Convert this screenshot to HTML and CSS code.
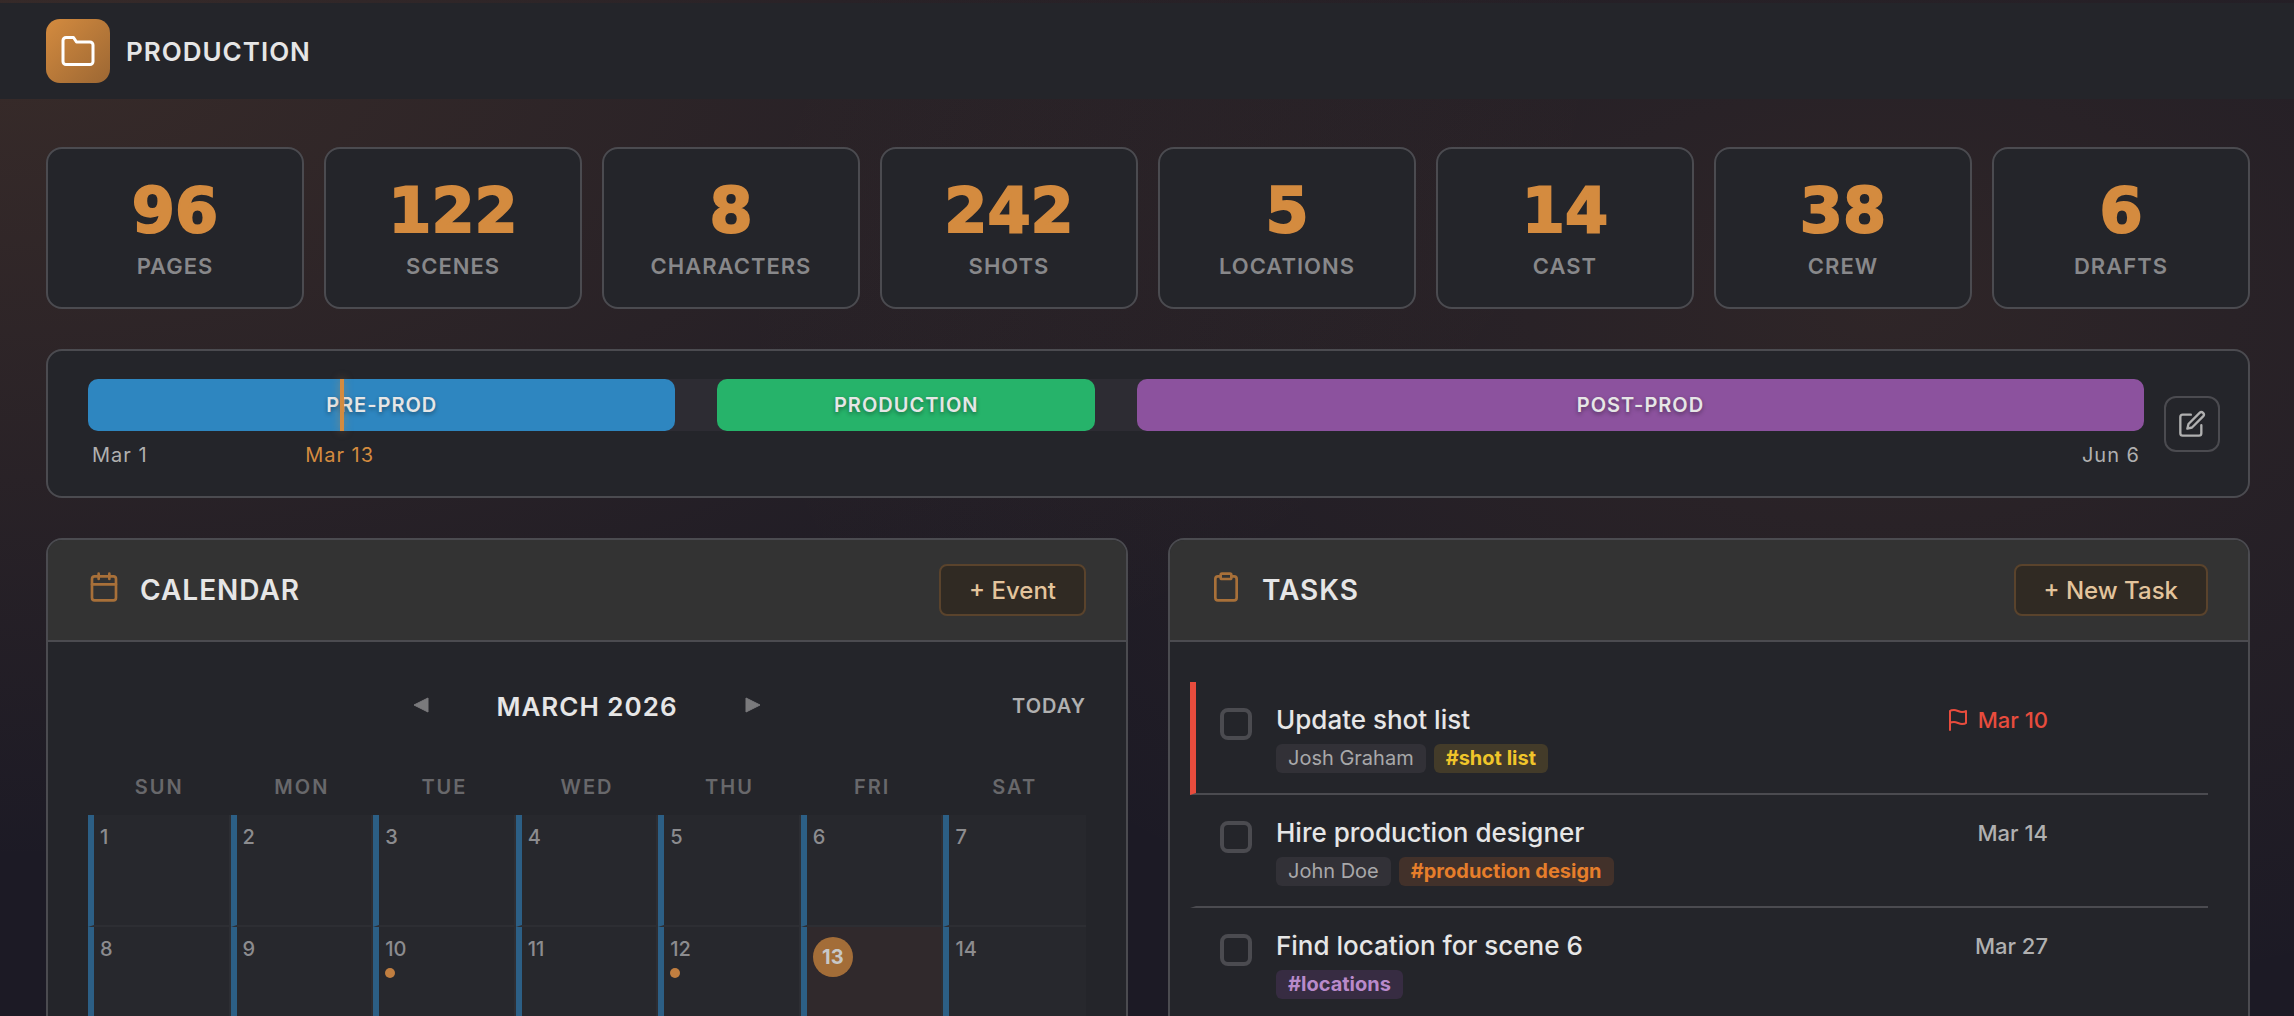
FILE: index.html
```html
<!DOCTYPE html>
<html lang="en">
<head>
    <meta charset="UTF-8">
    <meta name="viewport" content="width=device-width, initial-scale=1.0">
    <title>Production</title>
    <link rel="stylesheet" href="styles.css">
</head>
<body>
<header class="topbar">
    <div class="logo">
        <svg class="icon" width="36" height="36" viewBox="0 0 24 24"><path d="M22 19a2 2 0 0 1-2 2H4a2 2 0 0 1-2-2V5a2 2 0 0 1 2-2h5l2 3h9a2 2 0 0 1 2 2z"/></svg>
    </div>
    <h1>PRODUCTION</h1>
</header>
<main class="page">
    <section class="stats">
        <div class="stat"><div class="num">96</div><div class="label">PAGES</div></div>
        <div class="stat"><div class="num">122</div><div class="label">SCENES</div></div>
        <div class="stat"><div class="num">8</div><div class="label">CHARACTERS</div></div>
        <div class="stat"><div class="num">242</div><div class="label">SHOTS</div></div>
        <div class="stat"><div class="num">5</div><div class="label">LOCATIONS</div></div>
        <div class="stat"><div class="num">14</div><div class="label">CAST</div></div>
        <div class="stat"><div class="num">38</div><div class="label">CREW</div></div>
        <div class="stat"><div class="num">6</div><div class="label">DRAFTS</div></div>
    </section>

    <!-- 98 days, one fr per day -->
    <section class="timeline">
        <div class="schedule">
            <div class="track">
                <div class="phase pre">PRE-PROD</div>
                <div class="phase prod">PRODUCTION</div>
                <div class="phase post">POST-PROD</div>
                <div class="now" style="left:12.24%"></div>
            </div>
            <div class="dates">
                <span>Mar 1</span>
                <span class="now-date" style="left:12.24%">Mar 13</span>
                <span>Jun 6</span>
            </div>
        </div>
        <button class="edit" aria-label="Edit schedule">
            <svg class="icon" width="28" height="28" viewBox="0 0 24 24"><path d="M11 4H4a2 2 0 0 0-2 2v14a2 2 0 0 0 2 2h14a2 2 0 0 0 2-2v-7"/><path d="M18.5 2.5a2.121 2.121 0 0 1 3 3L12 15l-4 1 1-4 9.5-9.5z"/></svg>
        </button>
    </section>

    <div class="panels">
        <section class="panel">
            <div class="panel-head">
                <svg class="icon" width="32" height="32" viewBox="0 0 24 24"><rect x="3" y="4" width="18" height="18" rx="2"/><path d="M16 2v4M8 2v4M3 10h18"/></svg>
                <h2>CALENDAR</h2>
                <button class="add">+ Event</button>
            </div>
            <div class="calendar">
                <div class="month">
                    <button class="arrow" aria-label="Previous month"><svg width="16" height="16" viewBox="0 0 16 16"><path d="M15 1v14L1 8z"/></svg></button>
                    <h3>MARCH 2026</h3>
                    <button class="arrow" aria-label="Next month"><svg width="16" height="16" viewBox="0 0 16 16"><path d="M1 1v14l14-7z"/></svg></button>
                    <button class="today-btn">TODAY</button>
                </div>
                <table>
                    <thead>
                        <tr><th>SUN</th><th>MON</th><th>TUE</th><th>WED</th><th>THU</th><th>FRI</th><th>SAT</th></tr>
                    </thead>
                    <tbody>
                        <tr>
                            <td><span class="day">1</span></td>
                            <td><span class="day">2</span></td>
                            <td><span class="day">3</span></td>
                            <td><span class="day">4</span></td>
                            <td><span class="day">5</span></td>
                            <td><span class="day">6</span></td>
                            <td><span class="day">7</span></td>
                        </tr>
                        <tr>
                            <td><span class="day">8</span></td>
                            <td><span class="day">9</span></td>
                            <td><span class="day">10</span><i class="dot"></i></td>
                            <td><span class="day">11</span></td>
                            <td><span class="day">12</span><i class="dot"></i></td>
                            <td class="today"><span class="day">13</span></td>
                            <td><span class="day">14</span></td>
                        </tr>
                    </tbody>
                </table>
            </div>
        </section>

        <section class="panel">
            <div class="panel-head">
                <svg class="icon" width="32" height="32" viewBox="0 0 24 24"><path d="M16 4h2a2 2 0 0 1 2 2v14a2 2 0 0 1-2 2H6a2 2 0 0 1-2-2V6a2 2 0 0 1 2-2h2"/><rect x="8" y="2" width="8" height="4" rx="1"/></svg>
                <h2>TASKS</h2>
                <button class="add">+ New Task</button>
            </div>
            <ul class="tasks">
                <li class="task late">
                    <input type="checkbox" id="t1">
                    <div class="info">
                        <label for="t1">Update shot list</label>
                        <div class="tags"><span class="tag">Josh Graham</span><span class="tag yellow">#shot list</span></div>
                    </div>
                    <div class="due">
                        <svg class="icon" width="24" height="24" viewBox="0 0 24 24"><path d="M4 15s1-1 4-1 5 2 8 2 4-1 4-1V3s-1 1-4 1-5-2-8-2-4 1-4 1zM4 22v-7"/></svg>
                        Mar 10
                    </div>
                </li>
                <li class="task">
                    <input type="checkbox" id="t2">
                    <div class="info">
                        <label for="t2">Hire production designer</label>
                        <div class="tags"><span class="tag">John Doe</span><span class="tag orange">#production design</span></div>
                    </div>
                    <div class="due">Mar 14</div>
                </li>
                <li class="task">
                    <input type="checkbox" id="t3">
                    <div class="info">
                        <label for="t3">Find location for scene 6</label>
                        <div class="tags"><span class="tag purple">#locations</span></div>
                    </div>
                    <div class="due">Mar 27</div>
                </li>
            </ul>
        </section>
    </div>
</main>
</body>
</html>
```

FILE: styles.css
```css
*{
    margin:0;
    padding:0;
    box-sizing: border-box;
}
body{
    height:100vh;
    overflow: hidden;
    padding-top:3px;
    font-family: Inter, "Liberation Sans", sans-serif;
    color:#e6e6e6;
    background:
        radial-gradient(ellipse 70% 80% at 0% 5%, rgba(212,139,64,.15), transparent),
        radial-gradient(ellipse 50% 70% at 82% 30%, rgba(212,139,64,.1), transparent),
        #1c1a25;
}
button{
    font-family: inherit;
    background: none;
    border:none;
    cursor: pointer;
}
.icon{
    fill:none;
    stroke:currentColor;
    stroke-width:2;
    stroke-linecap: round;
    stroke-linejoin: round;
}

.topbar{
    display: flex;
    align-items: center;
    gap:16px;
    padding:16px 46px;
    background-color: #24252a;
}
.logo{
    width:64px;
    height:64px;
    display: flex;
    align-items: center;
    justify-content: center;
    border-radius:14px;
    background: linear-gradient(135deg, #d48b3f, #9c6733);
    color:#fff;
}
.topbar h1{
    font-size:26px;
    font-weight:600;
    letter-spacing:1px;
}

.page{
    padding:48px 44px 0 46px;
}
.stats{
    display: grid;
    grid-template-columns: repeat(8, 1fr);
    gap:20px;
}
.stat{
    padding:28px 0;
    text-align: center;
    border:2px solid #4b4b50;
    border-radius:16px;
    background-color: #24252a;
}
.num{
    font-family: "DejaVu Sans", sans-serif;
    font-size:62px;
    font-weight:bold;
    line-height:68px;
    color:#d48b3f;
    -webkit-text-stroke:2px #d48b3f;
}
.label{
    margin-top:8px;
    font-size:22px;
    font-weight:600;
    line-height:26px;
    letter-spacing:1px;
    color:#88888a;
}

.timeline{
    display: flex;
    align-items: center;
    gap:20px;
    margin-top:40px;
    padding:28px 28px 28px 40px;
    border:2px solid #4b4b50;
    border-radius:16px;
    background-color: #24252a;
}
.schedule{
    flex:1;
}
.track{
    position: relative;
    display: grid;
    grid-template-columns: 28fr 2fr 18fr 2fr 48fr;
    height:52px;
    border-radius:10px;
    background-color: #2d2c33;
}
.phase{
    display: flex;
    align-items: center;
    justify-content: center;
    border-radius:10px;
    font-size:20px;
    font-weight:600;
    letter-spacing:1px;
    text-shadow:0 2px 4px rgba(0,0,0,.4);
}
.pre{
    background-color: #2e86c0;
}
.prod{
    grid-column:3;
    background-color: #26b36a;
}
.post{
    grid-column:5;
    background-color: #8c529e;
}
.now{
    position: absolute;
    top:0;
    bottom:0;
    width:4px;
    background-color: #d48b3f;
    box-shadow:0 0 8px rgba(212,139,64,.5);
}
.dates{
    position: relative;
    display: flex;
    justify-content: space-between;
    padding:12px 4px 0;
    font-size:20px;
    line-height:25px;
    letter-spacing:1px;
    color:#b0b0b0;
}
.now-date{
    position: absolute;
    transform: translateX(-50%);
    color:#d48b3f;
}
.edit{
    display: flex;
    align-items: center;
    justify-content: center;
    width:56px;
    height:56px;
    border:2px solid #4b4b50;
    border-radius:12px;
    color:#b0b0b0;
}

.panels{
    display: grid;
    grid-template-columns: 1fr 1fr;
    gap:40px;
    margin-top:40px;
}
.panel{
    overflow: hidden;
    border:2px solid #4b4b50;
    border-radius:16px;
    background-color: #24252a;
}
.panel-head{
    display: flex;
    align-items: center;
    gap:20px;
    padding:24px 40px;
    background-color: #333;
    border-bottom:2px solid #4b4b50;
}
.panel-head .icon{
    margin-bottom:6px;
    color:#a87039;
}
.panel-head h2{
    font-size:28px;
    font-weight:600;
    letter-spacing:1px;
}
.add{
    height:52px;
    margin-left:auto;
    padding:0 28px;
    border:2px solid #5a432c;
    border-radius:8px;
    background-color: #302a23;
    font-size:24px;
    font-weight:500;
    color:#e3c49c;
}

.calendar{
    padding:40px;
}
.month{
    display: grid;
    grid-template-columns: 1fr 48px 284px 48px 1fr;
    align-items: center;
    height:48px;
}
.month h3{
    text-align: center;
    font-size:26px;
    font-weight:600;
    letter-spacing:1px;
}
.arrow{
    grid-column:2;
    height:48px;
}
.arrow svg{
    fill:#7a7a7c;
    stroke:#7a7a7c;
    stroke-linejoin: round;
}
h3 + .arrow{
    grid-column:4;
}
.today-btn{
    justify-self: end;
    font-size:20px;
    font-weight:600;
    letter-spacing:1px;
    color:#b0b0b0;
}
.calendar table{
    width:100%;
    margin-top:36px;
    table-layout: fixed;
    border-spacing:0;
}
th{
    height:49px;
    padding-bottom:8px;
    font-size:20px;
    font-weight:600;
    letter-spacing:2px;
    color:#68686b;
}
td{
    height:112px;
    padding:10px 6px;
    vertical-align: top;
    border:solid #2d2e33;
    border-width:0 2px 2px 0;
    border-left:6px solid #2c5f85;
    background-color: #27282d;
}
td:last-child{
    border-right:none;
}
.day{
    display: block;
    font-size:20px;
    font-weight:500;
    line-height:25px;
    color:#8c8c8f;
}
.dot{
    display: block;
    width:10px;
    height:10px;
    margin-top:6px;
    border-radius:50%;
    background-color: #c07e40;
}
.today{
    background-color: #30292c;
}
.today .day{
    width:40px;
    line-height:40px;
    border-radius:50%;
    background-color: #a36d38;
    text-align: center;
    font-weight:700;
    color:#c8c8c8;
}

.tasks{
    list-style: none;
    padding:40px 40px 40px 20px;
}
.task{
    display: flex;
    align-items: flex-start;
    gap:24px;
    padding:22px 160px 20px 24px;
    border-bottom:2px solid #4b4b50;
    border-left:6px solid transparent;
}
.late{
    border-left-color:#e84c3d;
}
.task input{
    appearance: none;
    width:32px;
    height:32px;
    margin-top:4px;
    border:4px solid #4b4b50;
    border-radius:8px;
}
.info{
    flex:1;
}
.info label{
    display: block;
    font-size:26px;
    font-weight:500;
    line-height:32px;
}
.tags{
    display: flex;
    gap:8px;
    margin-top:8px;
}
.tag{
    padding:0 12px;
    border-radius:6px;
    background-color: #323137;
    font-size:20px;
    line-height:29px;
    color:#a8a8aa;
}
.yellow, .orange, .purple{
    font-weight:700;
}
.yellow{
    background-color: #433b29;
    color:#f0c52a;
}
.orange{
    background-color: #42312a;
    color:#e67e2b;
}
.purple{
    background-color: #372c42;
    color:#b98acb;
}
.due{
    display: flex;
    align-items: center;
    gap:8px;
    font-size:22px;
    font-weight:500;
    line-height:32px;
    color:#b0b0b0;
}
.late .due{
    color:#e84c3d;
}
```
